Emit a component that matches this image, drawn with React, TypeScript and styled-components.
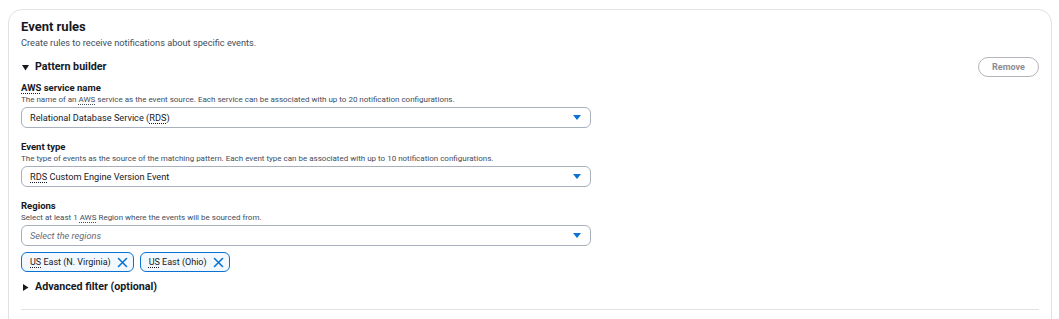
import React from "react";
import styled, { createGlobalStyle } from "styled-components";

const GlobalStyle = createGlobalStyle`
  html, body {
    margin: 0;
    height: 100%;
    overflow: hidden;
    background: #ffffff;
  }
  body {
    font-family: Roboto, "Liberation Sans", Arial, sans-serif;
    color: #16191f;
  }
`;

const Page = styled.div`
  padding: 9px 7px 0 8px;
`;

const Card = styled.section`
  border: 1px solid #e2e2e4;
  border-radius: 14px;
  padding: 8px 12px 40px 12px;
`;

const Title = styled.h2`
  margin: 0;
  font-size: 13px;
  line-height: 18px;
  font-weight: 700;
  color: #16191f;
`;

const Description = styled.p`
  margin: 0;
  font-size: 9.2px;
  line-height: 13px;
  color: #414d5c;
`;

const ExpandRow = styled.div<{ $top: number }>`
  display: flex;
  align-items: center;
  justify-content: space-between;
  margin-top: ${({ $top }) => $top}px;
`;

const ExpandLabel = styled.div`
  display: flex;
  align-items: center;
  gap: 6px;
  font-size: 10.7px;
  line-height: 14px;
  font-weight: 700;
  padding-left: 1px;
`;

const RemoveButton = styled.button`
  width: 61px;
  height: 20px;
  border: 1.5px solid #b4b4bb;
  border-radius: 10px;
  background: #ffffff;
  color: #8d8d95;
  font-family: inherit;
  font-size: 9px;
  font-weight: 700;
  padding: 0;
`;

const Fields = styled.div`
  margin-top: 4px;
  display: flex;
  flex-direction: column;
  gap: 12px;
  width: 570px;
`;

const Field = styled.div`
  display: flex;
  flex-direction: column;
`;

const Label = styled.div`
  font-size: 9.5px;
  line-height: 13px;
  font-weight: 700;
`;

const Hint = styled.div`
  font-size: 8px;
  line-height: 11px;
  color: #414d5c;
  margin-bottom: 2px;
`;

const Select = styled.div<{ $placeholder?: boolean }>`
  height: 21px;
  box-sizing: border-box;
  border: 1px solid #a8b0bb;
  border-radius: 6px;
  display: flex;
  align-items: center;
  justify-content: space-between;
  padding: 0 9px 0 8px;
  font-size: 9.2px;
  color: ${({ $placeholder }) => ($placeholder ? "#5f6b7a" : "#16191f")};
  font-style: ${({ $placeholder }) => ($placeholder ? "italic" : "normal")};
`;

const Abbr = styled.abbr`
  text-decoration: underline dotted;
  text-underline-offset: 2px;
  text-decoration-thickness: 1px;
`;

const Tokens = styled.div`
  display: flex;
  gap: 6px;
  margin-top: 6px;
`;

const Token = styled.div`
  height: 20px;
  box-sizing: border-box;
  border: 1.5px solid #0972d3;
  border-radius: 6px;
  background: #f2f8fd;
  display: flex;
  align-items: center;
  gap: 6px;
  padding: 0 5px 0 8px;
  font-size: 9px;
`;

const Divider = styled.hr`
  margin: 15px 0 0 0;
  border: none;
  border-top: 1px solid #e2e2e4;
`;

const Caret = () => (
  <svg width="8" height="5" viewBox="0 0 8 5">
    <polygon points="0,0 8,0 4,5" fill="#0972d3" />
  </svg>
);

const Disclosure = ({ open }: { open: boolean }) => (
  <svg width="7" height="7" viewBox="0 0 7 7">
    {open ? (
      <polygon points="0,1 7,1 3.5,6.5" fill="#16191f" />
    ) : (
      <polygon points="1,0 6.5,3.5 1,7" fill="#16191f" />
    )}
  </svg>
);

const Dismiss = () => (
  <svg width="11" height="11" viewBox="0 0 11 11">
    <path
      d="M1.5 1.5 L9.5 9.5 M9.5 1.5 L1.5 9.5"
      stroke="#0972d3"
      strokeWidth="1.6"
      strokeLinecap="round"
    />
  </svg>
);

export default function App() {
  return (
    <Page>
      <GlobalStyle />
      <Card>
        <Title>Event rules</Title>
        <Description>
          Create rules to receive notifications about specific events.
        </Description>
        <ExpandRow $top={8}>
          <ExpandLabel>
            <Disclosure open />
            Pattern builder
          </ExpandLabel>
          <RemoveButton>Remove</RemoveButton>
        </ExpandRow>
        <Fields>
          <Field>
            <Label>
              <Abbr>AWS</Abbr> service name
            </Label>
            <Hint>
              The name of an <Abbr>AWS</Abbr> service as the event source. Each
              service can be associated with up to 20 notification
              configurations.
            </Hint>
            <Select>
              <span>
                Relational Database Service (<Abbr>RDS</Abbr>)
              </span>
              <Caret />
            </Select>
          </Field>
          <Field>
            <Label>Event type</Label>
            <Hint>
              The type of events as the source of the matching pattern. Each
              event type can be associated with up to 10 notification
              configurations.
            </Hint>
            <Select>
              <span>
                <Abbr>RDS</Abbr> Custom Engine Version Event
              </span>
              <Caret />
            </Select>
          </Field>
          <Field>
            <Label>Regions</Label>
            <Hint>
              Select at least 1 <Abbr>AWS</Abbr> Region where the events will be
              sourced from.
            </Hint>
            <Select $placeholder>
              <span>Select the regions</span>
              <Caret />
            </Select>
            <Tokens>
              <Token>
                <span>
                  <Abbr>US</Abbr> East (N. Virginia)
                </span>
                <Dismiss />
              </Token>
              <Token>
                <span>
                  <Abbr>US</Abbr> East (Ohio)
                </span>
                <Dismiss />
              </Token>
            </Tokens>
          </Field>
        </Fields>
        <ExpandRow $top={8}>
          <ExpandLabel>
            <Disclosure open={false} />
            Advanced filter (optional)
          </ExpandLabel>
        </ExpandRow>
        <Divider />
      </Card>
    </Page>
  );
}
